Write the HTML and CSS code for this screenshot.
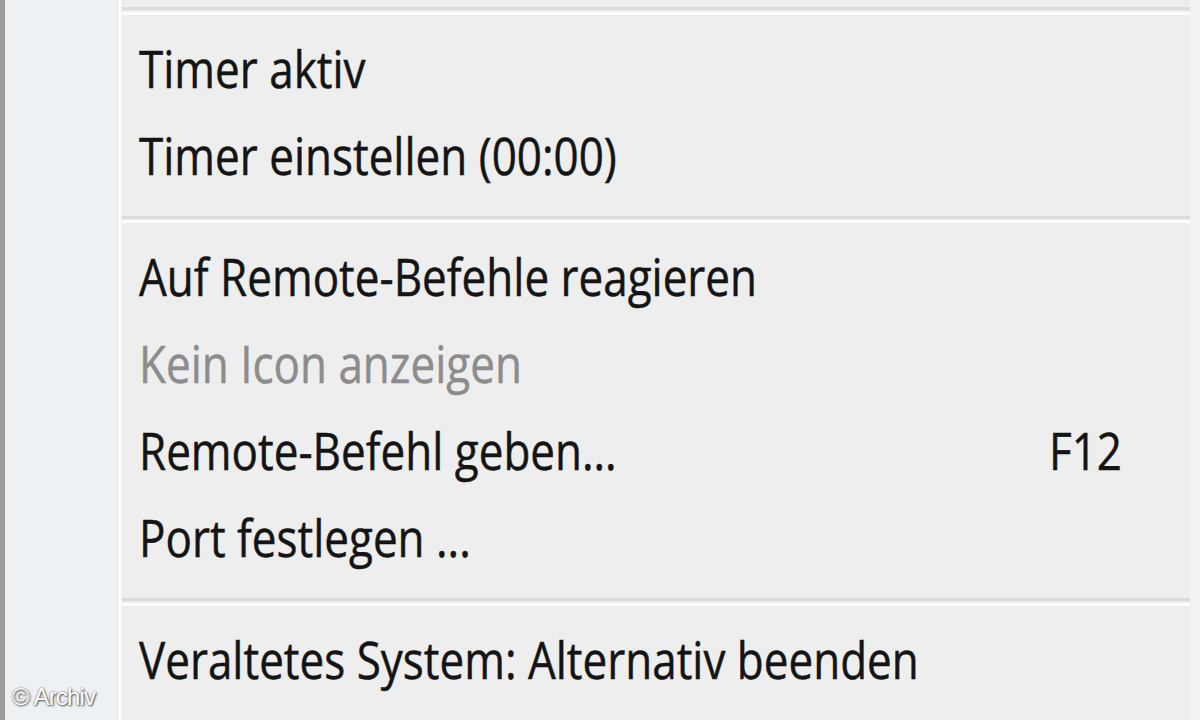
FILE: index.html
```html
<!DOCTYPE html>
<html lang="de">
<head>
<meta charset="utf-8">
<title>Kontextmenü</title>
<link rel="stylesheet" href="styles.css">
</head>
<body>
<div class="screen">
  <div class="edge"></div>
  <div class="gutter"></div>
  <div class="divider"></div>
  <div class="menu">
    <div class="top"></div>
    <div class="sep"></div>
    <div class="group">
      <div class="item"><span class="label">Timer aktiv</span></div>
      <div class="item"><span class="label">Timer einstellen (00:00)</span></div>
    </div>
    <div class="sep"></div>
    <div class="group">
      <div class="item"><span class="label">Auf Remote-Befehle reagieren</span></div>
      <div class="item disabled"><span class="label">Kein Icon anzeigen</span></div>
      <div class="item"><span class="label">Remote-Befehl geben...</span><span class="key">F12</span></div>
      <div class="item"><span class="label">Port festlegen ...</span></div>
    </div>
    <div class="sep"></div>
    <div class="group">
      <div class="item"><span class="label">Veraltetes System: Alternativ beenden</span></div>
    </div>
  </div>
  <div class="rim"></div>
  <div class="credit">© Archiv</div>
</div>
</body>
</html>
```
FILE: styles.css
```css
html, body {
  margin: 0;
  padding: 0;
  background: #eeeeee;
}
.screen {
  position: relative;
  display: flex;
  width: 1200px;
  height: 720px;
  overflow: hidden;
  font-family: "Open Sans", "Noto Sans", sans-serif;
}
.edge {
  width: 5px;
  background: #9c9c9c;
}
.gutter {
  width: 112px;
  background: #eef1f4;
}
.divider {
  width: 5px;
  background: linear-gradient(to right, #e2e4e6 0, #e2e4e6 1px, #ffffff 1px, #ffffff 4px, #f0f0f0 4px);
}
.menu {
  flex: 1;
  display: flex;
  flex-direction: column;
  background: #eeeeee;
}
.rim {
  width: 10px;
  background: #f3f3f3;
}
.top {
  height: 13px;
}
.sep {
  height: 3px;
  border-top: 3px solid #dbdbdb;
  border-bottom: 3px solid #fdfdfd;
  background: #ececec;
}
.group {
  padding: 13px 0 14px;
}
.item {
  display: flex;
  justify-content: space-between;
  height: 87px;
  line-height: 87px;
  padding: 0 68px 0 17px;
  font-size: 44px;
  color: #141414;
  white-space: nowrap;
}
.label, .key {
  display: inline-block;
  transform: scaleY(1.15);
  transform-origin: 0 61px;
  -webkit-text-stroke: 0.4px currentColor;
}
.item.disabled {
  color: #8c8c8c;
}
.credit {
  position: absolute;
  left: 12px;
  top: 683px;
  font-family: "Liberation Sans", Arial, sans-serif;
  font-size: 24px;
  color: #ffffff;
  text-shadow: 0 0 2px #666, 1px 1px 2px #555;
  letter-spacing: -0.8px;
}
```
